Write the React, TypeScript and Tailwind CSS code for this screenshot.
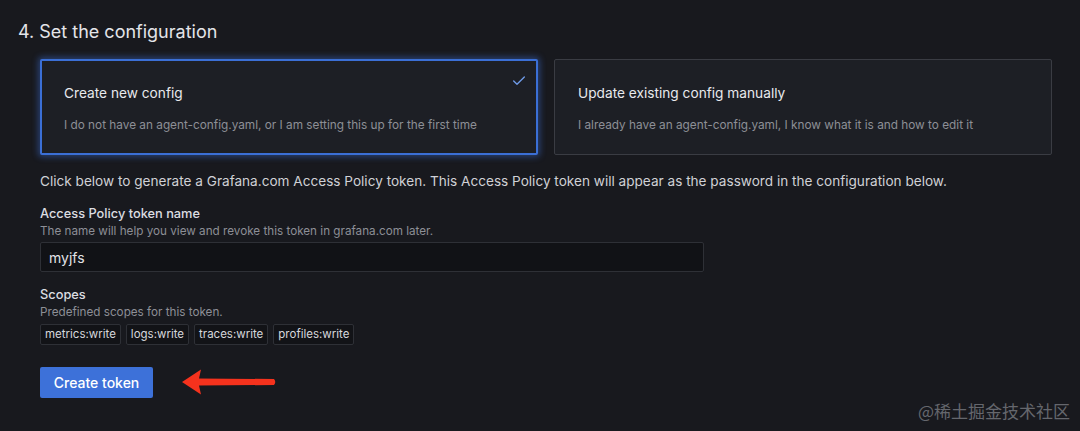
import { Check } from "lucide-react";

const scopes = ["metrics:write", "logs:write", "traces:write", "profiles:write"];

export default function App() {
  return (
    <div
      className="relative w-[1080px] h-[431px] overflow-hidden bg-[#18191e] text-[#d8d9de]"
      style={{ fontFamily: "Inter, 'Noto Sans', sans-serif" }}
    >
      {/* heading */}
      <h2 className="pt-[20px] pl-[18px] text-[18px] leading-[24px] font-normal text-[#e4e5e9]">
        4. Set the configuration
      </h2>

      <div className="pl-[40px] pr-[28px]">
        {/* options */}
        <div className="mt-[15px] grid grid-cols-2 gap-[16px]">
          <div className="relative h-[96px] rounded-[2px] border-2 border-[#3b6fd6] bg-[#1d1f25] pl-[22px] pt-[22px] shadow-[0_0_6px_2px_rgba(61,113,217,0.45)]">
            <div className="text-[13.7px] leading-[20px] text-[#e8e9ed]">Create new config</div>
            <div className="mt-[14px] text-[11.8px] leading-[16px] text-[#8d8f96]">
              I do not have an agent-config.yaml, or I am setting this up for the first time
            </div>
            <Check className="absolute right-[9px] top-[12px] text-[#6f9be8]" size={16} strokeWidth={2} />
          </div>
          <div className="h-[96px] rounded-[2px] border border-[#3a3c43] bg-[#1d1f25] pl-[23px] pt-[23px]">
            <div className="text-[13.7px] leading-[20px] text-[#e8e9ed]">Update existing config manually</div>
            <div className="mt-[14px] text-[11.8px] leading-[16px] text-[#8d8f96]">
              I already have an agent-config.yaml, I know what it is and how to edit it
            </div>
          </div>
        </div>

        <p className="mt-[16px] text-[13.6px] leading-[20px] text-[#d0d1d6]">
          Click below to generate a Grafana.com Access Policy token. This Access Policy token will appear as the password in the configuration below.
        </p>

        {/* token name */}
        <div className="mt-[14px] text-[12.8px] leading-[18px] font-medium text-[#dcdde1]">Access Policy token name</div>
        <div className="text-[11.7px] leading-[16px] text-[#8d8f96]">
          The name will help you view and revoke this token in grafana.com later.
        </div>
        <div className="mt-[3px] flex h-[30px] w-[664px] items-center rounded-[2px] border border-[#2e3036] bg-[#111216] pl-[8px] text-[14px] text-[#e2e3e7]">
          myjfs
        </div>

        {/* scopes */}
        <div className="mt-[14px] text-[12.8px] leading-[18px] font-medium text-[#dcdde1]">Scopes</div>
        <div className="text-[11.7px] leading-[16px] text-[#8d8f96]">Predefined scopes for this token.</div>
        <div className="mt-[4px] flex gap-[5px]">
          {scopes.map((s) => (
            <span
              key={s}
              className="flex h-[21px] items-center rounded-[2px] border border-[#2e3036] bg-[#121317] px-[4px] text-[11.5px] text-[#d6d7dc]"
            >
              {s}
            </span>
          ))}
        </div>

        <button className="mt-[22px] h-[31px] w-[113px] rounded-[2px] bg-[#3d71d9] text-[14px] font-medium text-white">
          Create token
        </button>
      </div>

      {/* annotation arrow */}
      <svg className="absolute left-[180px] top-[368px]" width="98" height="28" viewBox="0 0 98 28">
        <path
          d="M2 14 L21 1.5 L19 10.5 L94 11 Q96.5 14 94 17 L19 17.5 L21 26.5 Z"
          fill="#f5321d"
        />
      </svg>

      {/* watermark */}
      <div
        className="absolute right-[10px] top-[400px] text-[17px] leading-[22px] text-[#65676d]"
        style={{ fontFamily: "'Noto Sans CJK SC', 'Noto Sans', sans-serif" }}
      >
        @稀土掘金技术社区
      </div>
    </div>
  );
}
